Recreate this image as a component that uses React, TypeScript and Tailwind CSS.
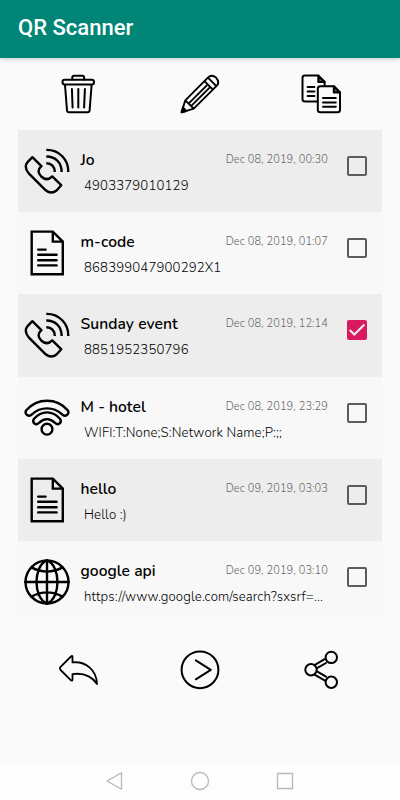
import type { ReactNode } from "react";
import clsx from "clsx";

type IconProps = { children: ReactNode; size?: "sm" | "lg" };

// sm icons are 40px action buttons, lg icons are the 46px row icons
function Icon({ children, size = "sm" }: IconProps) {
  return (
    <svg
      viewBox={size === "sm" ? "0 0 40 40" : "0 0 46 46"}
      className={clsx("shrink-0", size === "sm" ? "h-10 w-10" : "h-[46px] w-[46px]")}
      fill="none"
      stroke="#000"
      strokeWidth={size === "sm" ? 2 : 2.4}
      strokeLinecap="round"
      strokeLinejoin="round"
    >
      {children}
    </svg>
  );
}

const TrashIcon = () => (
  <Icon>
    <path d="M13.3 5.5V3.5Q13.3 1.8 15 1.8H23.4Q25.1 1.8 25.1 3.5V5.5" />
    <rect x="3.5" y="5.8" width="31.5" height="4.8" rx="2.3" />
    <path d="M6 11L8 36.4Q8.2 38.2 10 38.2H28.6Q30.4 38.2 30.6 36.4L32.6 11M12.9 15L13.6 33.5M19.3 15V33.5M25.9 15L25.1 33.5" />
  </Icon>
);

const PencilIcon = () => (
  <Icon>
    <path d="M1.6 38.3L5.3 26.3L27.9 3.6Q31.8-.2 36.2 3.8Q40.2 8.2 36.4 12.1L13.7 34.7ZM5.3 26.3L13.7 34.7M9.3 28.9L26.6 11.6M11.8 31.4L29.1 14.1M24.4 7.1L32.9 15.6M27.9 3.6L36.4 12.1" strokeWidth="1.9" />
    <path d="M1.6 38.3L3 33.6L6.4 37Z" fill="#000" />
  </Icon>
);

const CopyIcon = () => (
  <Icon>
    <path d="M15.5 27.4H4Q1.5 27.4 1.5 24.9V4Q1.5 1.6 4 1.6H17.3L23.6 8V11.5" />
    <path d="M17.3 1.6V8H23.6Z" fill="#555" />
    <path d="M6.6 13H13.4M6.6 17.4H13.4M6.6 22H13.4" />
    <path d="M19.3 12.3H32.8L39 18.5V35.7Q39 38.2 36.5 38.2H19.3Q16.8 38.2 16.8 35.7V14.8Q16.8 12.3 19.3 12.3Z" />
    <path d="M32.8 12.3V18.5H39Z" fill="#555" />
    <path d="M22 24H34.8M22 28.4H34.8M22 32.8H34.8" />
  </Icon>
);

const PhoneIcon = () => (
  <Icon size="lg">
    <path d="M8.4 9.2L3.8 13.8Q-.6 19 4.7 25.3L21.7 42.3Q27.3 46.8 32.8 42.3L37.2 37.2L28.2 28.4Q23 33.8 17.2 28.5Q11.8 23 17.4 18.2Z" />
    <path d="M22.3 1.9C34.8 1.7 44.4 11 44.3 24M22.3 8.5C31.5 8.4 37.7 14.7 37.6 24M22.3 15.3C27.4 15.2 30.9 18.7 30.8 24" strokeLinecap="butt" />
  </Icon>
);

const DocumentIcon = () => (
  <Icon size="lg">
    <path d="M7.7 1.6H28.8L38.8 11.6V44.2H7.7ZM28.8 1.6V11.6H38.8" strokeLinejoin="miter" />
    <path d="M14.2 19.6H21.6M14.2 24.8H32.6M14.2 30.2H32.6M14.2 35.4H32.6" />
  </Icon>
);

const WifiIcon = () => (
  <Icon size="lg">
    <path d="M2.3 15.2C13.4 2.5 32.6 2.5 43.7 15.2C46.1 19.2 41.3 22.6 37.8 19.1C29.5 11.4 16.5 11.4 8.2 19.1C4.7 22.6-.1 19.2 2.3 15.2Z" />
    <path d="M9.8 24C17.6 15.2 28.4 15.2 36.2 24C38.2 28 34.2 30.8 31 27.9C26 22.9 20 22.9 15 27.9C11.8 30.8 7.8 28 9.8 24Z" />
    <circle cx="23" cy="34.2" r="5.4" />
  </Icon>
);

const GlobeIcon = () => (
  <Icon size="lg">
    <circle cx="23" cy="23" r="21.5" />
    <path d="M1.2 23H44.8M23 1.2V44.8M23 1.2C9 7 9 39 23 44.8M23 1.2C37 7 37 39 23 44.8M7.5 8.4Q23 16.8 38.5 8.4M7.5 37.6Q23 29.2 38.5 37.6" />
  </Icon>
);

const BackIcon = () => (
  <Icon>
    <path d="M1.6 16.9L12 6.5Q13.3 5.2 13.5 6.8V12.4C26.5 11 37.6 19.8 38 34C33 26.5 25 22.6 13.5 24.1V29.5Q13.4 31.4 12 30.3L1.6 20Q.3 18.5 1.6 16.9Z" strokeWidth="1.8" />
  </Icon>
);

const NextIcon = () => (
  <Icon>
    <circle cx="20" cy="19.8" r="18.4" />
    <path d="M15.8 10.4L30.8 19.8L15.8 29.3" />
  </Icon>
);

const ShareIcon = () => (
  <Icon>
    <path d="M14 14.8L23.2 9.4M16 18.2L25 13M14 24.8L23.2 30.2M16 21.4L25 26.6" />
    <circle cx="10" cy="19.8" r="5.7" />
    <circle cx="30.3" cy="7.4" r="5.7" />
    <circle cx="30.3" cy="32.3" r="5.7" />
  </Icon>
);

const rows = [
  { title: "Jo", value: "4903379010129", date: "Dec 08, 2019, 00:30", icon: PhoneIcon },
  { title: "m-code", value: "868399047900292X1", date: "Dec 08, 2019, 01:07", icon: DocumentIcon },
  { title: "Sunday event", value: "8851952350796", date: "Dec 08, 2019, 12:14", icon: PhoneIcon, checked: true },
  { title: "M - hotel", value: "WIFI:T:None;S:Network Name;P:;;", date: "Dec 08, 2019, 23:29", icon: WifiIcon },
  { title: "hello", value: "Hello :)", date: "Dec 09, 2019, 03:03", icon: DocumentIcon },
  { title: "google api", value: "https://www.google.com/search?sxsrf=...", date: "Dec 09, 2019, 03:10", icon: GlobeIcon },
];

function Checkbox({ checked }: { checked?: boolean }) {
  return (
    <span
      role="checkbox"
      aria-checked={!!checked}
      className={clsx(
        "mt-[26px] flex h-5 w-5 shrink-0 rounded-[2px]",
        checked ? "bg-[#d81b60]" : "border-2 border-[#5c5c5c]"
      )}
    >
      {checked && (
        <svg viewBox="0 0 20 20" className="h-5 w-5" fill="none" stroke="#f6e8ee" strokeWidth="2.1">
          <path d="M2.7 10L7.3 14.6L17.4 4.6" />
        </svg>
      )}
    </span>
  );
}

export default function App() {
  return (
    <div className="flex h-[800px] w-[400px] flex-col overflow-hidden bg-[#fafafa] font-['Nunito','Open_Sans',sans-serif] text-black">
      <header className="flex h-[57.5px] shrink-0 items-center bg-[#008577] px-[18px] pb-[2.5px] shadow-[0_1px_4px_rgba(0,0,0,0.2)]">
        <h1 className="font-[Roboto,sans-serif] text-[22px] leading-7 font-medium text-white">QR Scanner</h1>
      </header>

      <div className="grid h-[72.5px] shrink-0 grid-cols-3 place-items-center px-[18px]">
        <TrashIcon />
        <PencilIcon />
        <CopyIcon />
      </div>

      <main className="mx-[18px] grid h-[486px] shrink-0 grid-rows-[82px_82px_83px_82px_82px_75px]">
        {rows.map(({ title, value, date, icon: RowIcon, checked }, i) => (
          <div key={title} className={clsx("flex pr-[15px] pl-1.5", i % 2 === 0 ? "bg-[#ededed]" : "bg-[#f8f8f8]")}>
            <div className="mt-[18px]">
              <RowIcon />
            </div>
            <div className="ml-[10px] min-w-0 flex-1 whitespace-nowrap">
              <div className="mt-[19px] flex justify-between pr-[19px] pl-[0.5px]">
                <h2 className="text-[15.6px] leading-[23px] font-semibold tracking-[0.05px]">{title}</h2>
                <time className="pt-px text-[11px] leading-5 font-light tracking-[0.1px] text-[#666]">{date}</time>
              </div>
              <p className="mt-[3px] ml-1 text-[13.2px] leading-[22px] font-light tracking-[0.14px]">{value}</p>
            </div>
            <Checkbox checked={checked} />
          </div>
        ))}
      </main>

      <div className="mt-[34px] grid h-10 shrink-0 grid-cols-3 place-items-center px-[18px]">
        <BackIcon />
        <NextIcon />
        <ShareIcon />
      </div>

      <nav className="mt-auto flex h-[38px] shrink-0 items-center justify-center bg-[#fdfdfd] pb-[1px]">
        <svg viewBox="0 0 190 20" className="h-5 w-[190px]" fill="none" stroke="#b8b8b8" strokeWidth="1.3" strokeLinejoin="round">
          <path d="M2 10L16.5 1.8V18.2Z" />
          <circle cx="95" cy="10" r="8.5" />
          <rect x="172.5" y="2.5" width="15" height="15" />
        </svg>
      </nav>
    </div>
  );
}
